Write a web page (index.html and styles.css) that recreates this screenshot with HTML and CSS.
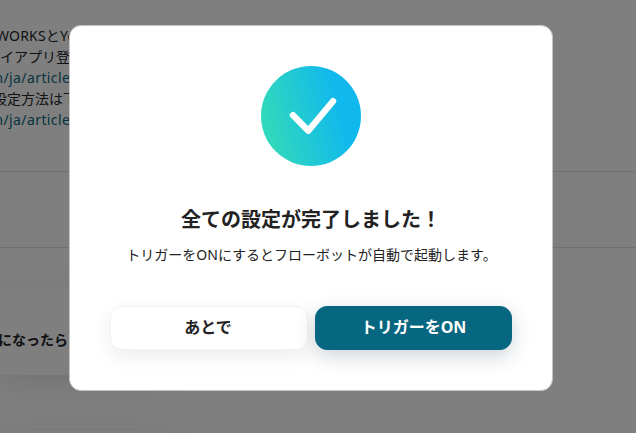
FILE: index.html
```html
<!DOCTYPE html>
<html lang="ja">
<head>
<meta charset="utf-8">
<title>設定完了</title>
<link rel="stylesheet" href="styles.css">
</head>
<body>
<main class="page">
  <section class="notes">
    <p class="note note-works">WORKSとYo</p>
    <p class="note note-app">マイアプリ登録</p>
    <p class="note note-link">m/ja/articles</p>
    <p class="note note-setup">設定方法は下</p>
    <p class="note note-link">m/ja/articles</p>
  </section>
  <section class="band"></section>
  <section class="flow">
    <div class="card"><p class="card-text">になったら</p></div>
    <div class="card"></div>
  </section>
</main>
<div class="overlay">
  <div class="modal" role="dialog">
    <svg class="check" viewBox="0 0 100 100">
      <defs>
        <linearGradient id="fill" gradientUnits="userSpaceOnUse" x1="8" y1="65" x2="82" y2="46">
          <stop offset="0" stop-color="#30d8bd"/>
          <stop offset="1" stop-color="#10b8ee"/>
        </linearGradient>
      </defs>
      <circle cx="50" cy="50" r="50" fill="url(#fill)"/>
      <path d="M32 49.2L47.3 64.8L72 35.2" fill="none" stroke="#fff" stroke-width="6.4" stroke-linecap="round" stroke-linejoin="round"/>
    </svg>
    <h1 class="title">全ての設定が完了しました！</h1>
    <p class="message">トリガーをONにするとフローボットが自動で起動します。</p>
    <div class="actions">
      <button class="button later">あとで</button>
      <button class="button primary">トリガーをON</button>
    </div>
  </div>
</div>
</body>
</html>
```
FILE: styles.css
```css
* { box-sizing: border-box; }
body {
  margin: 0;
  height: 433px;
  overflow: hidden;
  color: #212529;
  font: 14px/21px "Noto Sans", "Noto Sans CJK JP", sans-serif;
}
p, h1 { margin: 0; }
.page { height: 433px; overflow: hidden; background: #fff; }
.notes { height: 172px; padding-top: 25px; border-bottom: 1px solid #e2e2e2; }
.note { height: 21px; white-space: nowrap; }
.note-works { margin-left: -4px; letter-spacing: .2px; }
.note-app { margin-left: -14px; }
.note-link { margin-left: -10px; letter-spacing: .4px; color: #086780; }
.note-setup { margin-left: -7px; }
.band { height: 76px; border-bottom: 1px solid #e2e2e2; }
.flow {
  display: flex;
  flex-direction: column;
  gap: 56px;
  height: 185px;
  padding-top: 40px;
  background: #fefefe;
}
.card {
  flex: none;
  width: 167px;
  height: 87px;
  padding-top: 41px;
  background: #fff;
  box-shadow: 0 6px 28px rgba(0, 0, 0, .1);
}
.card-text { margin-left: -2px; font-weight: 700; white-space: nowrap; }
.overlay {
  position: absolute;
  inset: 0;
  padding: 25px 0 0 69px;
  background: rgba(0, 0, 0, .5);
}
.modal {
  display: flex;
  flex-direction: column;
  align-items: center;
  width: 484px;
  height: 366px;
  padding: 40px;
  border: 1px solid #c4c4c4;
  border-radius: 12px;
  background: #fff;
  color: #222;
}
.check { width: 100px; height: 100px; flex: none; }
.title { margin-top: 39px; font-size: 20px; line-height: 30px; }
.message { margin-top: 9px; padding-left: 1px; line-height: 21px; }
.actions { display: flex; gap: 7px; margin-top: 41px; }
.button {
  width: 198px;
  height: 44px;
  padding: 0 0 2px;
  border: 1px solid #f3f3f3;
  border-radius: 12px;
  font: 700 16px/24px "Noto Sans", "Noto Sans CJK JP", sans-serif;
}
.later { padding-right: 2px; background: #fff; color: #222; box-shadow: 0 6px 20px rgba(0, 0, 0, .08); }
.primary { width: 197px; border-color: #086780; background: #086780; color: #fff; box-shadow: 0 6px 20px rgba(8, 35, 55, .2); }
```
